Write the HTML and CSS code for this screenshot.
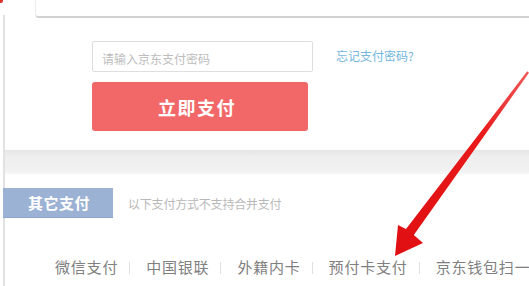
FILE: index.html
```html
<!DOCTYPE html>
<html lang="zh-CN">
<head>
<meta charset="utf-8">
<title>京东支付</title>
<link rel="stylesheet" href="styles.css">
</head>
<body>
<div class="page">
  <span class="dot"></span>
  <div class="card-edge"></div>
  <section class="pay">
    <div class="pwd-row">
      <input class="pwd" type="text" placeholder="请输入京东支付密码">
      <a class="forgot" href="#">忘记支付密码?</a>
    </div>
    <button class="pay-btn" type="button">立即支付</button>
  </section>
  <div class="band"></div>
  <section class="other">
    <div class="other-head">
      <div class="tab">其它支付</div>
      <div class="note">以下支付方式不支持合并支付</div>
    </div>
    <div class="methods">
      <span class="method">微信支付</span><span class="sep"></span>
      <span class="method">中国银联</span><span class="sep"></span>
      <span class="method">外籍内卡</span><span class="sep"></span>
      <span class="method">预付卡支付</span><span class="sep"></span>
      <span class="method">京东钱包扫一扫</span>
    </div>
  </section>
  <svg class="arrow" width="529" height="286" viewBox="0 0 529 286">
    <defs>
      <linearGradient id="ag" x1="1" y1="0" x2="0" y2="1">
        <stop offset="0" stop-color="#f05a5a"/>
        <stop offset="0.35" stop-color="#e81a1a"/>
        <stop offset="1" stop-color="#e00f12"/>
      </linearGradient>
    </defs>
    <polygon fill="url(#ag)" points="527.2,71.3 529,72.8 413.8,234.9 423,243 395,256 398,225 406,229"/>
  </svg>
</div>
</body>
</html>
```

FILE: styles.css
```css
html, body {
  margin: 0;
  padding: 0;
  background: #fff;
}

body {
  font-family: "Noto Sans CJK SC", "Noto Sans", sans-serif;
  width: 529px;
  height: 286px;
  overflow: hidden;
}

.page {
  position: relative;
  width: 529px;
  height: 286px;
  overflow: hidden;
  background:
    linear-gradient(#e2e2e2, #e2e2e2) no-repeat 3px 15px / 2px 100%,
    #fff;
}

.dot {
  position: absolute;
  left: -2px;
  top: -2px;
  width: 5px;
  height: 5px;
  border-radius: 50%;
  background: #e03030;
}

.card-edge {
  height: 16px;
  margin-left: 35px;
  border-bottom: 2px solid #d2d2d2;
  border-left: 1px solid #ececec;
  border-bottom-left-radius: 4px;
}

.pay {
  display: flex;
  flex-direction: column;
  align-items: flex-start;
  padding: 23px 0 19px 92px;
}

.pwd-row {
  display: flex;
  align-items: center;
  gap: 23px;
}

.pwd {
  box-sizing: border-box;
  width: 221px;
  height: 31px;
  margin: 0;
  padding: 3px 0 0 9px;
  border: 1px solid #dedede;
  border-radius: 2px;
  font-family: inherit;
  font-size: 12px;
  color: #999;
  outline: none;
}

.pwd::placeholder {
  color: #bdbdbd;
}

.forgot {
  font-size: 12px;
  color: #72b6dc;
  text-decoration: none;
  margin-top: -2px;
}

.pay-btn {
  width: 216px;
  height: 49px;
  margin-top: 10px;
  border: none;
  border-radius: 3px;
  background: #f26868;
  color: #fff;
  font-family: inherit;
  font-size: 18px;
  font-weight: 700;
  letter-spacing: 1.5px;
  padding: 0 6px 0 0;
}

.band {
  height: 24px;
  background: linear-gradient(#e6e6e6, #efefef 30%, #f1f1f1 85%, #f8f8f8);
  margin-left: 5px;
}

.other {
  padding-top: 14px;
}

.other-head {
  display: flex;
  align-items: center;
  padding-left: 3px;
}

.tab {
  width: 110px;
  height: 30px;
  box-sizing: border-box;
  padding-left: 25px;
  background: #9cb2d5;
  border-bottom: 1px solid #8ea6cc;
  color: #fff;
  font-size: 15px;
  font-weight: 700;
  line-height: 30px;
  letter-spacing: 0.5px;
}

.note {
  margin-left: 15px;
  font-size: 12px;
  color: #b8b8b8;
  letter-spacing: -0.2px;
}

.methods {
  display: flex;
  align-items: center;
  margin-top: 38px;
  padding-left: 55px;
  white-space: nowrap;
  font-size: 15px;
  color: #808080;
  letter-spacing: 0.8px;
}

.sep {
  flex: none;
  width: 1px;
  height: 12px;
  margin: 2px 16px 0 11px;
  background: #e0e0e0;
}

.arrow {
  position: absolute;
  left: 0;
  top: 0;
  pointer-events: none;
}
```
